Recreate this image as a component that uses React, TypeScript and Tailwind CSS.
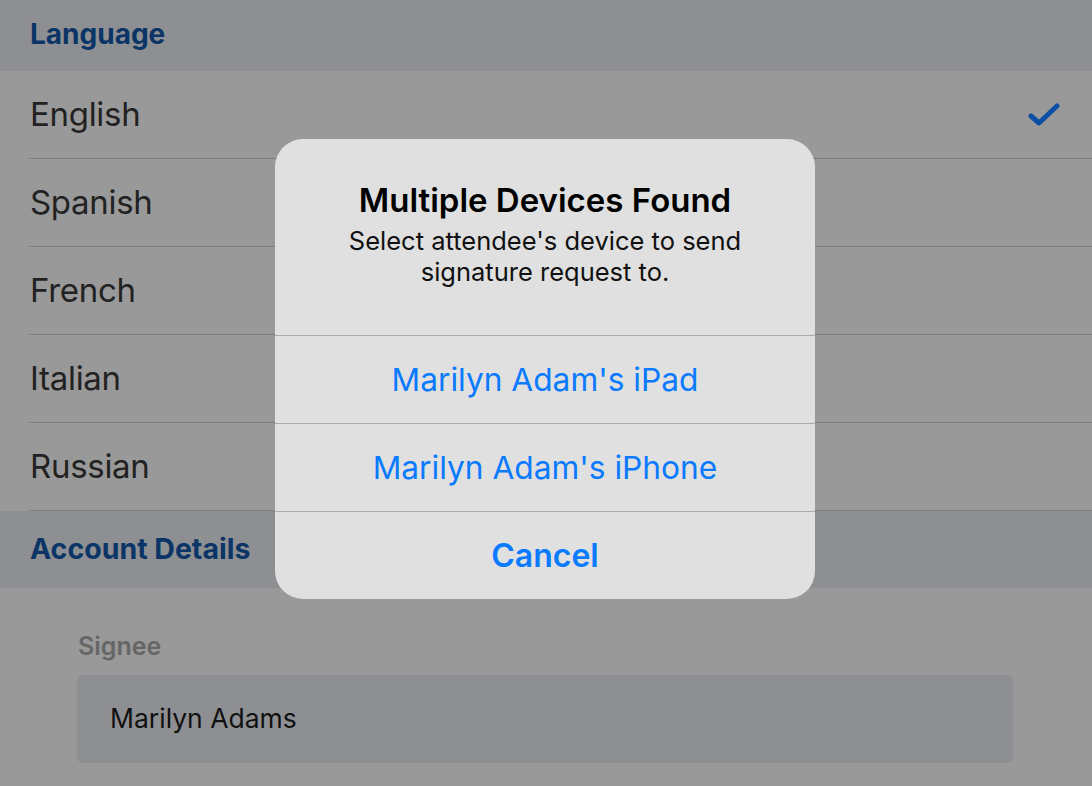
import React from "react";

const LANGS = ["English", "Spanish", "French", "Italian", "Russian"];
const DEVICES = ["Marilyn Adam's iPad", "Marilyn Adam's iPhone"];

function Check() {
  return (
    <svg width="32" height="26" viewBox="0 0 32 26" fill="none">
      <path
        d="M3 14 L11 21 L29 4"
        stroke="#0d4fa3"
        strokeWidth="5"
        strokeLinecap="round"
        strokeLinejoin="round"
      />
    </svg>
  );
}

export default function App() {
  return (
    <div
      className="relative w-[1092px] h-[786px] overflow-hidden bg-[#999999]"
      style={{ fontFamily: "Inter, 'Noto Sans', sans-serif" }}
    >
      {/* Language section */}
      <div className="h-[71px] bg-[#8e8f92] flex items-center pl-[30px] pb-[3px]">
        <span className="text-[28px] font-bold text-[#0b3566]">Language</span>
      </div>
      <div className="pl-[29px]">
        {LANGS.map((lang, i) => (
          <div
            key={lang}
            className="h-[88px] flex items-center justify-between pr-[32px] border-b border-[#7f7f7f]"
          >
            <span className="text-[33px] tracking-[-0.3px] text-[#222222] pl-[1px]">
              {lang}
            </span>
            {i === 0 && <Check />}
          </div>
        ))}
      </div>

      {/* Account details */}
      <div className="h-[77px] bg-[#8e8f92] flex items-center pl-[30px]">
        <span className="text-[28.5px] font-bold text-[#0b3566]">
          Account Details
        </span>
      </div>
      <div className="pl-[77px] pr-[79px] pt-[40px]">
        <div className="text-[25px] font-semibold text-[#666666] pl-[1px]">
          Signee
        </div>
        <div className="mt-[9px] h-[88px] rounded-[6px] bg-[#8e8f92] flex items-center pl-[33px]">
          <span className="text-[26.5px] text-[#111111]">Marilyn Adams</span>
        </div>
      </div>

      {/* Alert */}
      <div className="absolute left-[275px] top-[139px] w-[540px] rounded-[28px] bg-[#e0e0e0] overflow-hidden">
        <div className="h-[196px] flex flex-col items-center pt-[43px] text-center">
          <div className="text-[33px] font-semibold text-black leading-[36px]">
            Multiple Devices Found
          </div>
          <div className="text-[25.5px] text-[#111111] leading-[31px] mt-[7px] w-[440px]">
            Select attendee's device to send signature request to.
          </div>
        </div>
        {DEVICES.map((d) => (
          <div
            key={d}
            className="h-[88px] border-t border-[#acacac] flex items-center justify-center text-[31.7px] text-[#0a7aff]"
          >
            {d}
          </div>
        ))}
        <div className="h-[88px] border-t border-[#acacac] flex items-center justify-center text-[32px] font-semibold text-[#0a7aff]">
          Cancel
        </div>
      </div>
    </div>
  );
}
